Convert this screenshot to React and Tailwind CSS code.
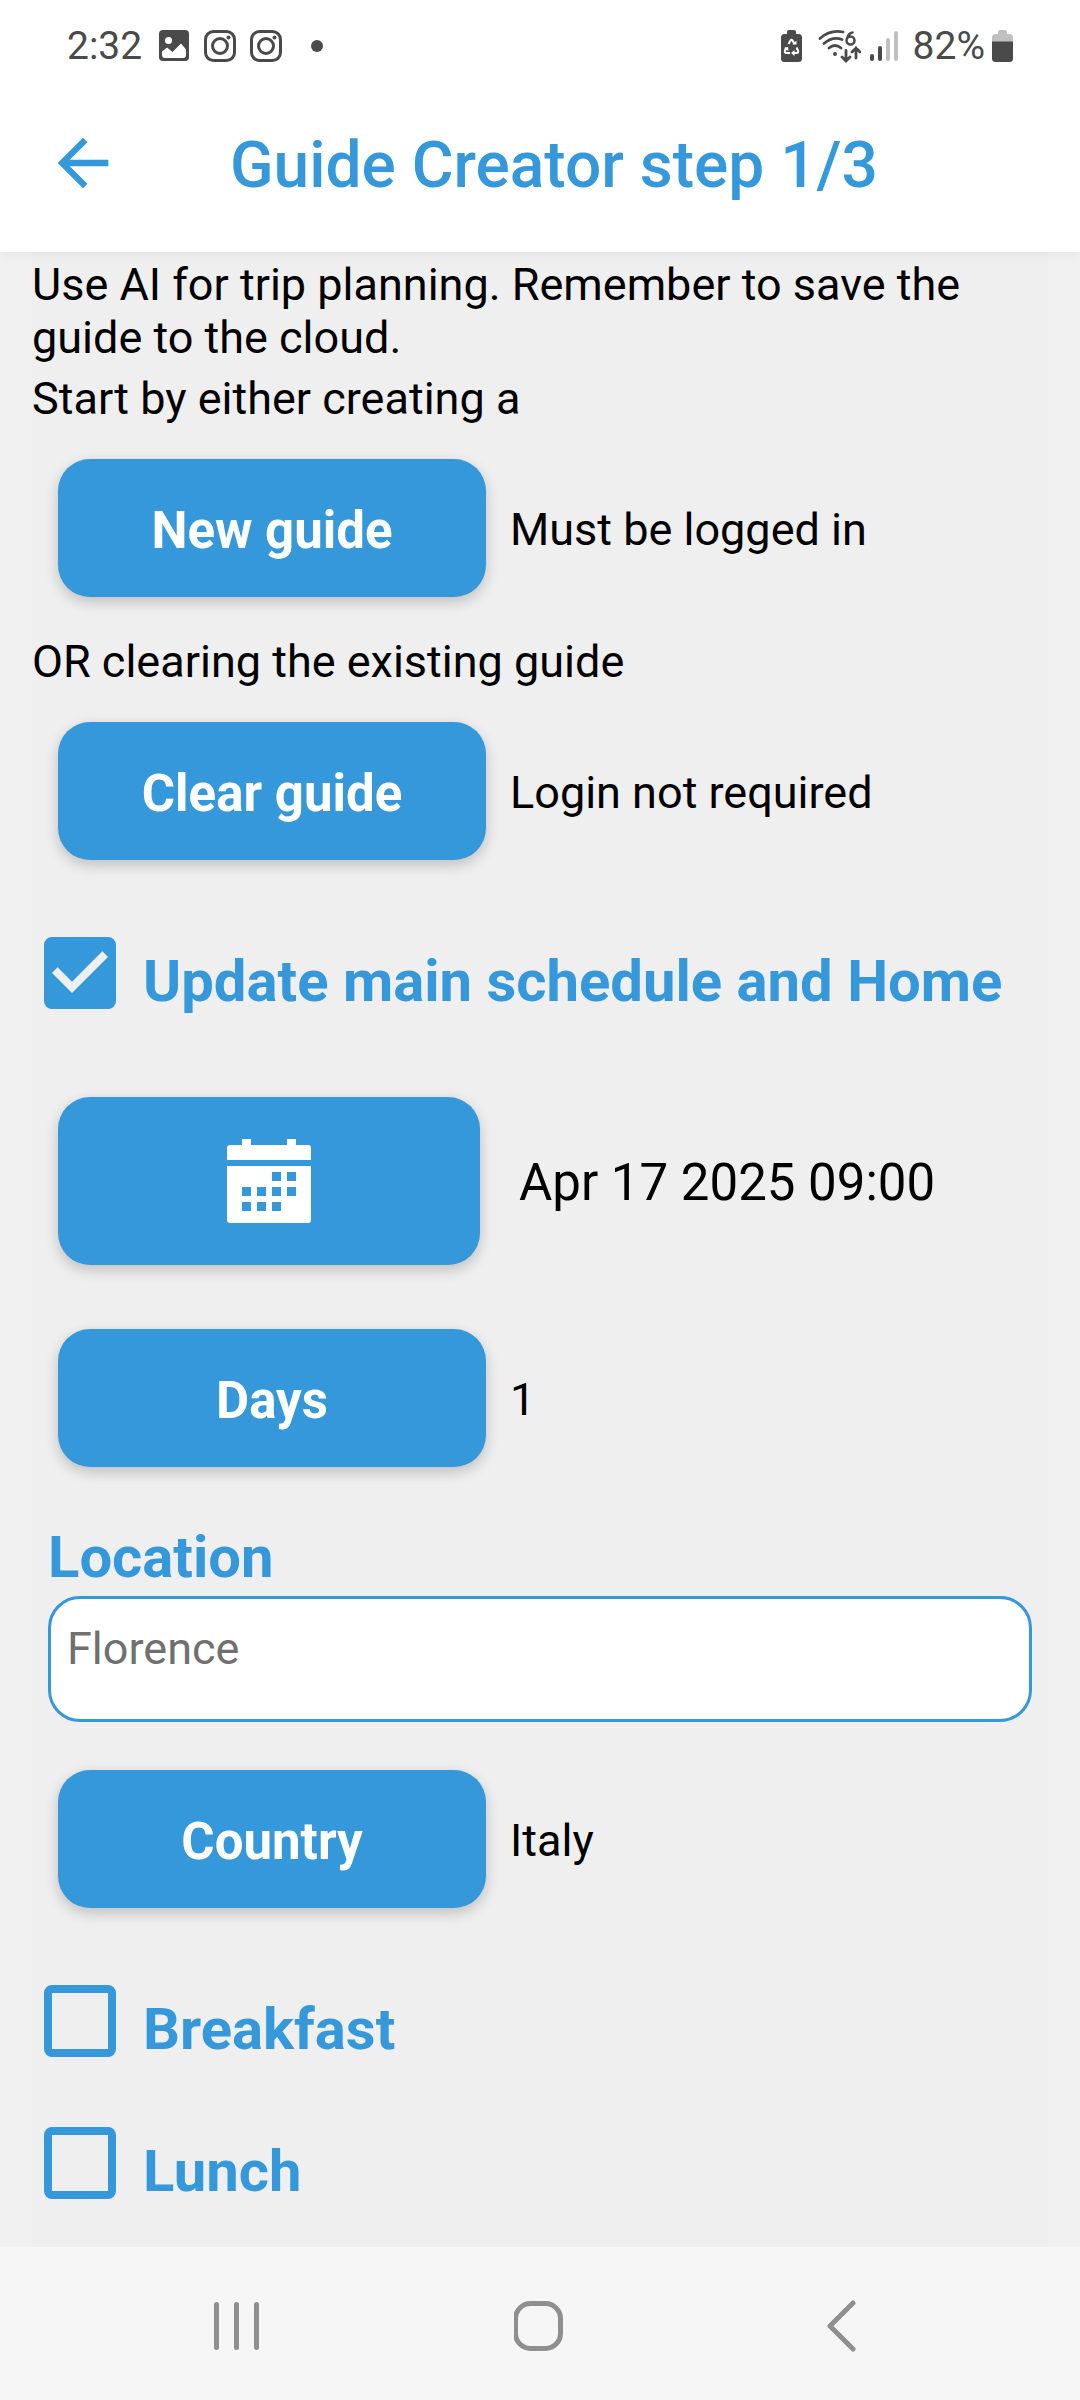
import { useState } from 'react';
import { MdArrowBack } from 'react-icons/md';

function InstagramIcon() {
  return (
    <svg className="h-8 w-8" viewBox="0 0 32 32" fill="none" stroke="currentColor" strokeWidth="3">
      <rect x="1.5" y="1.5" width="29" height="29" rx="8" />
      <circle cx="16" cy="16" r="7.5" />
      <circle cx="24.5" cy="7.5" r="2" fill="currentColor" stroke="none" />
    </svg>
  );
}

function StatusBar() {
  return (
    <div className="flex h-21 items-center justify-between px-[67px] pt-[7px] text-[#4a4a4a]">
      <div className="flex items-center">
        <span className="mr-[17px] text-[39px] leading-[46px]">2:32</span>
        <svg className="mr-[15px] h-[31px] w-[30px]" viewBox="0 0 30 31">
          <rect width="30" height="31" rx="4" fill="currentColor" />
          <circle cx="9.5" cy="10.5" r="3.5" fill="#fff" />
          <path d="M3 21.500l5-4 5.500 4.500 8.500-8.500 5 6V25a3 3 0 0 1-3 3H6a3 3 0 0 1-3-3z" fill="#fff" />
        </svg>
        <div className="flex gap-[14px]">
          <InstagramIcon />
          <InstagramIcon />
        </div>
        <span className="ml-[29px] h-3 w-3 rounded-full bg-[#4a4a4a]" />
      </div>

      <div className="flex items-center">
        <svg className="mr-4 h-8 w-[21px]" viewBox="0 0 21 32">
          <path d="M6 4V2a2 2 0 0 1 2-2h5a2 2 0 0 1 2 2v2h2.500a3.500 3.500 0 0 1 3.500 3.500v21a3.500 3.500 0 0 1-3.500 3.500h-14A3.500 3.500 0 0 1 0 28.500v-21A3.500 3.500 0 0 1 3.500 4z" fill="currentColor" />
          <path d="M7.500 14l2-3.500q1-1.500 2 0l2 3.500M15.500 17.500l1.500 3q.8 2.500-1.500 2.500H12M9 23H5.500Q3.200 23 4 20.500l1.500-3" fill="none" stroke="#fff" strokeWidth="2" />
          <path d="M11.500 14.500h4v-4zM13.500 20v6l-3.500-3zM3 18l4-1 .5 4z" fill="#fff" />
        </svg>
        <svg className="mr-[9px] h-[34px] w-[43px]" viewBox="0 0 43 34" fill="none" stroke="currentColor" strokeWidth="2.8" strokeLinecap="round">
          <path d="M2 9.500Q12 .5 25 3M6 14.500q9-7.500 18-4M11 19q6-5 12 0" />
          <circle cx="17" cy="25" r="2" fill="currentColor" stroke="none" />
          <path d="M34.500 3.500q-4 .5-5.500 6M32.500 7.500a4 4 0 1 1 0 8 4 4 0 0 1 0-8" strokeWidth="2.500" />
          <path d="M28 21.500v10M24 28l4 4 4-4M38 29V19M34 23l4-4 4 4" />
        </svg>
        <svg className="mr-[15px] h-[30px] w-7" viewBox="0 0 28 30" fill="currentColor">
          <rect x="0" y="23" width="4" height="7" rx="2" />
          <rect x="8" y="15" width="4" height="15" rx="2" />
          <rect x="16" y="7" width="4" height="23" rx="2" opacity=".35" />
          <rect x="24" y="0" width="4" height="30" rx="2" opacity=".35" />
        </svg>
        <span className="mr-[7px] text-[39px] leading-[46px]">82%</span>
        <svg className="h-8 w-[21px]" viewBox="0 0 21 32">
          <path d="M6 4V2a2 2 0 0 1 2-2h5a2 2 0 0 1 2 2v2h2.500A3.500 3.500 0 0 1 21 7.500V12H0V7.500A3.500 3.500 0 0 1 3.500 4z" fill="#c0c0c0" />
          <path d="M0 11.500h21v17a3.500 3.500 0 0 1-3.500 3.500h-14A3.500 3.500 0 0 1 0 28.500z" fill="currentColor" />
        </svg>
      </div>
    </div>
  );
}

function CalendarIcon() {
  return (
    <svg className="h-21 w-21" viewBox="0 0 28 28" fill="#fff">
      <path d="M5 2V0h3v2h12V0h3v2h4q1 0 1 1v4H0V3q0-1 1-1z" />
      <path
        fillRule="evenodd"
        d="M0 9h28v18q0 1-1 1H1q-1 0-1-1zM15 11h3v3h-3zM20 11h3v3h-3zM5 16h3v3H5zM10 16h3v3h-3zM15 16h3v3h-3zM20 16h3v3h-3zM5 21h3v3H5zM10 21h3v3h-3zM15 21h3v3h-3z"
      />
    </svg>
  );
}

function ActionRow({ label, note }) {
  return (
    <div className="flex items-center gap-6 pl-[26px]">
      <button
        type="button"
        className="h-[138px] w-[428px] rounded-[32px] bg-[#3498db] pt-[6px] text-[51px] leading-[60px] font-bold text-white shadow-[0_5px_14px_rgba(0,0,0,0.2)]"
      >
        {label}
      </button>
      <span className="pt-[2px]">{note}</span>
    </div>
  );
}

function CheckRow({ label, checked, onChange }) {
  return (
    <label className="flex items-start gap-[27px] pl-3">
      <span className="grid shrink-0">
        <input
          type="checkbox"
          checked={checked}
          onChange={onChange}
          className="col-start-1 row-start-1 h-18 w-18 appearance-none rounded-lg border-8 border-[#3498db] checked:bg-[#3498db]"
        />
        {checked && (
          <svg className="pointer-events-none col-start-1 row-start-1 h-18 w-18" viewBox="3 3 18 18" fill="#efefef">
            <path d="M10 17l-5-5 1.410-1.410L10 14.170l7.590-7.590L19 8z" />
          </svg>
        )}
      </span>
      <span className="pt-[11px] text-[58px] leading-[67px] font-bold text-[#3498db]">{label}</span>
    </label>
  );
}

function NavBar() {
  return (
    <nav className="grid h-[153px] grid-cols-3 items-center bg-[#f6f6f6] px-[86px] pt-1 text-[#8f8f8f]">
      <button type="button" aria-label="Recents" className="flex justify-center">
        <svg className="h-13 w-13" viewBox="0 0 52 52" fill="currentColor">
          <rect x="3" y="2" width="5" height="48" rx="2.500" />
          <rect x="23" y="2" width="5" height="48" rx="2.500" />
          <rect x="43" y="2" width="5" height="48" rx="2.500" />
        </svg>
      </button>
      <button type="button" aria-label="Home" className="flex justify-center">
        <svg className="h-13 w-13" viewBox="0 0 52 52" fill="none" stroke="currentColor" strokeWidth="5">
          <rect x="1.500" y="3.500" width="45" height="45" rx="15" />
        </svg>
      </button>
      <button type="button" aria-label="Back" className="flex justify-center">
        <svg className="h-13 w-13" viewBox="0 0 52 52" fill="none" stroke="currentColor" strokeWidth="5" strokeLinecap="round" strokeLinejoin="round">
          <path d="M36 3L13 26l23 23" />
        </svg>
      </button>
    </nav>
  );
}

function App() {
  const [updateMain, setUpdateMain] = useState(true);
  const [breakfast, setBreakfast] = useState(false);
  const [lunch, setLunch] = useState(false);
  const [location, setLocation] = useState('');

  return (
    <div className="flex min-h-screen flex-col bg-[#f1f1f1] font-[Roboto,sans-serif] text-[45px] leading-[53px] text-black">
      <header className="relative bg-white shadow-[0_2px_10px_rgba(0,0,0,0.06)]">
        <StatusBar />
        <div className="flex h-42 items-center pb-[10px] pl-[45px]">
          <button type="button" aria-label="Back">
            <MdArrowBack className="h-19 w-19 text-[#3498db]" />
          </button>
          <h1 className="ml-[109px] pt-1 text-[64px] leading-[75px] font-medium text-[#3498db]">
            Guide Creator step 1/3
          </h1>
        </div>
      </header>

      <main className="mx-8 grow bg-[#efefef] pt-[6px]">
        <p>Use AI for trip planning. Remember to save the guide to the cloud.</p>
        <p className="mt-2 mb-[34px]">Start by either creating a</p>
        <ActionRow label="New guide" note="Must be logged in" />
        <p className="mt-[38px] mb-[34px]">OR clearing the existing guide</p>
        <ActionRow label="Clear guide" note="Login not required" />

        <div className="mt-[77px] mb-[82px]">
          <CheckRow
            label="Update main schedule and Home"
            checked={updateMain}
            onChange={() => setUpdateMain(!updateMain)}
          />
        </div>

        <div className="mb-16 flex items-center gap-[39px] pl-[26px]">
          <button
            type="button"
            aria-label="Pick date"
            className="flex h-42 w-[422px] items-center justify-center rounded-[32px] bg-[#3498db] shadow-[0_5px_14px_rgba(0,0,0,0.2)]"
          >
            <CalendarIcon />
          </button>
          <span className="pt-1 text-[51px] leading-[60px]">Apr 17 2025 09:00</span>
        </div>

        <ActionRow label="Days" note="1" />

        <div className="mt-[57px] mb-12 px-4">
          <label htmlFor="location" className="mb-[5px] block text-[58px] leading-[67px] font-bold text-[#3498db]">
            Location
          </label>
          <input
            id="location"
            type="text"
            placeholder="Florence"
            value={location}
            onChange={(e) => setLocation(e.target.value)}
            className="block h-[126px] w-full rounded-[32px] border-3 border-[#3498db] bg-white px-4 pt-6 pb-[46px] placeholder:text-[#707070]"
          />
        </div>

        <ActionRow label="Country" note="Italy" />

        <div className="mt-[77px] flex flex-col gap-16">
          <CheckRow label="Breakfast" checked={breakfast} onChange={() => setBreakfast(!breakfast)} />
          <CheckRow label="Lunch" checked={lunch} onChange={() => setLunch(!lunch)} />
        </div>
      </main>

      <NavBar />
    </div>
  );
}

export default App;
